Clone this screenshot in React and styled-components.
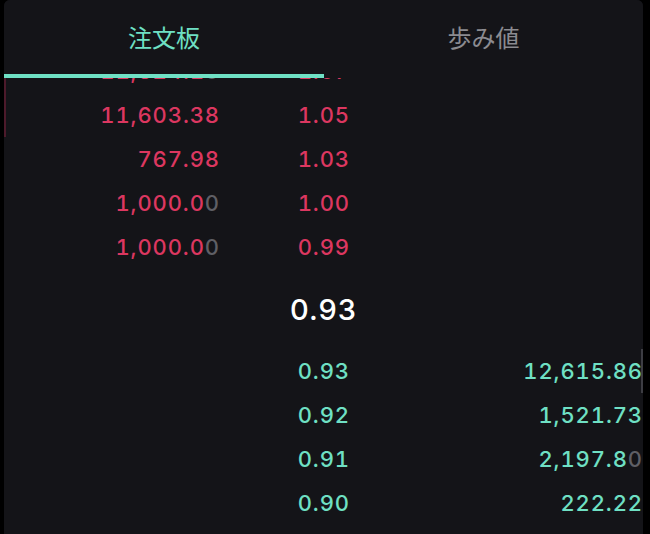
import React from "react";
import styled, { createGlobalStyle } from "styled-components";

const GlobalStyle = createGlobalStyle`
  html, body { margin: 0; padding: 0; background: #000; }
  body { font-family: Inter, "Noto Sans CJK JP", sans-serif; -webkit-font-smoothing: antialiased; }
`;

const TEAL = "#6fe0c4";
const RED = "#dc3760";

const Panel = styled.div`
  margin-left: 4px;
  width: 639px;
  height: 534px;
  background: #141418;
  border-radius: 6px 6px 0 0;
  overflow: hidden;
  display: flex;
  flex-direction: column;
`;

const Tabs = styled.div`
  display: grid;
  grid-template-columns: 320px 1fr;
  height: 78px;
  flex-shrink: 0;
  position: relative;
  z-index: 1;
  background: #141418;
`;

const Tab = styled.div`
  display: flex;
  align-items: center;
  justify-content: center;
  padding-bottom: 2px;
  font-family: "Noto Sans CJK JP", sans-serif;
  font-size: 24px;
  color: ${(p) => (p.$active ? TEAL : "#8b8b90")};
  border-bottom: 4px solid ${(p) => (p.$active ? TEAL : "transparent")};
`;

const Book = styled.div`
  flex: 1;
  overflow: hidden;
`;

/* the book is scrolled a little, so the top ask row sits under the tabs */
const Scroll = styled.div`
  margin-top: -29px;
`;

const Row = styled.div`
  position: relative;
  display: grid;
  grid-template-columns: 215px 130px 1fr;
  height: 44px;
  align-items: center;
  font-size: 22px;
  font-weight: 500;
  letter-spacing: 0.9px;
  font-variant-numeric: tabular-nums;
  color: ${(p) => (p.$side === "ask" ? RED : TEAL)};
`;

/* negative right margin cancels the trailing letter-spacing */
const Cell = styled.span`
  text-align: right;
  margin-right: -1px;
  padding-right: ${(p) => p.$pr || 0}px;
`;

const Dim = styled.span`
  color: #5f5f65;
`;

const DepthBar = styled.div`
  position: absolute;
  top: 0;
  bottom: 0;
  width: 2px;
  ${(p) => (p.$side === "ask" ? "left: 0;" : "right: 0;")}
  background: ${(p) => (p.$side === "ask" ? "#4d1a2b" : "#3d3d43")};
`;

const Mid = styled.div`
  height: 80px;
  display: flex;
  align-items: center;
  justify-content: center;
  font-size: 29px;
  font-weight: 500;
  letter-spacing: 1px;
  color: #fff;
`;

const asks = [
  { size: "11,624.1", dim: "0", price: "1.07", bar: true },
  { size: "11,603.38", dim: "", price: "1.05", bar: true },
  { size: "767.98", dim: "", price: "1.03" },
  { size: "1,000.0", dim: "0", price: "1.00" },
  { size: "1,000.0", dim: "0", price: "0.99" },
];

const bids = [
  { price: "0.93", size: "12,615.86", dim: "", bar: true },
  { price: "0.92", size: "1,521.73", dim: "" },
  { price: "0.91", size: "2,197.8", dim: "0" },
  { price: "0.90", size: "222.22", dim: "" },
];

export default function App() {
  return (
    <>
      <GlobalStyle />
      <Panel>
        <Tabs>
          <Tab $active>注文板</Tab>
          <Tab>歩み値</Tab>
        </Tabs>
        <Book>
          <Scroll>
            {asks.map((a, i) => (
              <Row key={"a" + i} $side="ask">
                {a.bar && <DepthBar $side="ask" />}
                <Cell>
                  {a.size}
                  {a.dim && <Dim>{a.dim}</Dim>}
                </Cell>
                <Cell>{a.price}</Cell>
                <Cell />
              </Row>
            ))}
            <Mid>0.93</Mid>
            {bids.map((b, i) => (
              <Row key={"b" + i} $side="bid">
                {b.bar && <DepthBar $side="bid" />}
                <Cell />
                <Cell>{b.price}</Cell>
                <Cell $pr={1}>
                  {b.size}
                  {b.dim && <Dim>{b.dim}</Dim>}
                </Cell>
              </Row>
            ))}
          </Scroll>
        </Book>
      </Panel>
    </>
  );
}
